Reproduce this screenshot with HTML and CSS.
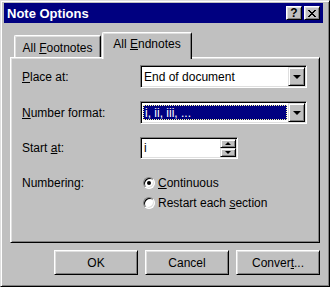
FILE: index.html
```html
<!DOCTYPE html>
<html lang="en">
<head>
    <meta charset="UTF-8">
    <title>Note Options</title>
    <link rel="stylesheet" href="styles.css">
</head>
<body>
    <div class="window">
        <div class="titlebar">
            <span class="title">Note Options</span>
            <div class="title-buttons">
                <span class="tbtn help">?</span>
                <span class="tbtn close">
                    <svg width="8" height="7" viewBox="0 0 8 7"><path d="M0 0h2v1h-2zM6 0h2v1h-2zM1 1h2v1h-2zM5 1h2v1h-2zM2 2h4v1h-4zM3 3h2v1h-2zM2 4h4v1h-4zM1 5h2v1h-2zM5 5h2v1h-2zM0 6h2v1h-2zM6 6h2v1h-2z" fill="#000"/></svg>
                </span>
            </div>
        </div>

        <div class="content">
            <div class="tabs">
                <div class="tab"><span>All <u>F</u>ootnotes</span></div>
                <div class="tab active"><span>All <u>E</u>ndnotes</span></div>
            </div>

            <div class="panel">
                <div class="row row-place">
                    <span class="label"><u>P</u>lace at:</span>
                    <div class="combo">
                        <span class="value">End of document</span>
                        <span class="drop"><span class="arrow"></span></span>
                    </div>
                </div>
                <div class="row row-format">
                    <span class="label"><u>N</u>umber format:</span>
                    <div class="combo">
                        <span class="value selected">i, ii, iii, ...</span>
                        <span class="drop"><span class="arrow"></span></span>
                    </div>
                </div>
                <div class="row row-start">
                    <span class="label">Start <u>a</u>t:</span>
                    <div class="spin">
                        <span class="value">i</span>
                        <span class="spin-buttons">
                            <span class="spin-btn"><span class="arrow up"></span></span>
                            <span class="spin-btn"><span class="arrow"></span></span>
                        </span>
                    </div>
                </div>
                <div class="row row-numbering">
                    <span class="label">Numbering:</span>
                    <div class="radios">
                        <div class="radio-row"><span class="radio checked"></span><span><u>C</u>ontinuous</span></div>
                        <div class="radio-row"><span class="radio"></span><span>Restart each <u>s</u>ection</span></div>
                    </div>
                </div>
            </div>

            <div class="buttons">
                <div class="button"><span>OK</span></div>
                <div class="button"><span>Cancel</span></div>
                <div class="button"><span>Conver<u>t</u>...</span></div>
            </div>
        </div>
    </div>
</body>
</html>
```

FILE: styles.css
```css
* {
    box-sizing: border-box;
}

body {
    margin: 0;
    font-family: "Liberation Sans", Arial, sans-serif;
    font-size: 12px;
    color: #000;
    background-color: #c0c0c0;
}

.window {
    width: 330px;
    height: 287px;
    background-color: #c0c0c0;
    border: 1px solid;
    border-color: #dfdfdf #000 #000 #dfdfdf;
    box-shadow: inset 1px 1px #fff, inset -1px -1px #808080;
    padding: 2px 3px 3px 3px;
    display: flex;
    flex-direction: column;
}

.titlebar {
    height: 20px;
    margin-right: 3px;
    background-color: #000080;
    display: flex;
    align-items: center;
    justify-content: space-between;
    padding: 0 3px 0 3px;
}

.title {
    color: #fff;
    font-weight: bold;
    font-size: 13px;
}

.title-buttons {
    display: flex;
    gap: 2px;
}

.tbtn {
    width: 16px;
    height: 14px;
    background-color: #c0c0c0;
    border: 1px solid;
    border-color: #fff #000 #000 #fff;
    box-shadow: inset 1px 1px #dfdfdf, inset -1px -1px #808080;
    display: flex;
    align-items: center;
    justify-content: center;
}

.help {
    font-weight: bold;
    font-size: 12px;
    line-height: 1;
}

.content {
    padding: 9px 6px 0 6px;
}

.tabs {
    height: 25px;
    display: flex;
    align-items: flex-end;
    padding-left: 4px;
}

.tab {
    height: 22px;
    width: 87px;
    border: 1px solid;
    border-bottom: none;
    border-color: #fff #000 #000 #fff;
    box-shadow: inset 1px 1px #dfdfdf, inset -1px 0 #808080;
    border-radius: 2px 2px 0 0;
    display: flex;
    align-items: center;
    justify-content: center;
    padding-top: 2px;
}

.tab.active {
    position: relative;
    z-index: 1;
    width: 90px;
    height: 27px;
    margin-left: 1px;
    margin-bottom: -2px;
    padding-top: 0;
    padding-bottom: 4px;
    background-color: #c0c0c0;
}

.panel {
    height: 186px;
    border: 1px solid;
    border-color: #fff #000 #000 #fff;
    box-shadow: inset 1px 1px #dfdfdf, inset -1px -1px #808080;
    padding: 7px 0 0 11px;
}

.row {
    display: flex;
    align-items: center;
}

.label {
    width: 118px;
    flex: none;
}

.row-place,
.row-format {
    height: 23px;
    margin-bottom: 13px;
}

.row-start {
    height: 22px;
}

.row-numbering {
    align-items: flex-start;
    margin-top: 16px;
}

.row-numbering .label {
    line-height: 16px;
}

.combo,
.spin {
    height: 100%;
    background-color: #fff;
    border: 1px solid;
    border-color: #808080 #fff #fff #808080;
    box-shadow: inset 1px 1px #000, inset -1px -1px #dfdfdf;
    padding: 1px 1px 1px 1px;
    display: flex;
    align-items: stretch;
}

.combo {
    width: 167px;
}

.spin {
    width: 98px;
}

.value {
    flex: 1;
    display: flex;
    align-items: center;
    padding-left: 2px;
}

.value.selected {
    margin: 2px 1px 2px 1px;
    padding-left: 1px;
    background-color: #000080;
    color: #fff;
    border: 1px dotted #ffff9c;
}

.drop {
    width: 17px;
    background-color: #c0c0c0;
    border: 1px solid;
    border-color: #dfdfdf #000 #000 #dfdfdf;
    box-shadow: inset 1px 1px #fff, inset -1px -1px #808080;
    display: flex;
    align-items: center;
    justify-content: center;
}

.arrow {
    width: 0;
    height: 0;
    border-left: 4px solid transparent;
    border-right: 4px solid transparent;
    border-top: 4px solid #000;
}

.spin-buttons {
    width: 16px;
    display: flex;
    flex-direction: column;
}

.spin-btn {
    flex: 1;
    background-color: #c0c0c0;
    border: 1px solid;
    border-color: #dfdfdf #000 #000 #dfdfdf;
    box-shadow: inset 1px 1px #fff, inset -1px -1px #808080;
    display: flex;
    align-items: center;
    justify-content: center;
}

.spin-btn .arrow {
    border-left-width: 3px;
    border-right-width: 3px;
    border-top-width: 3px;
}

.spin-btn .arrow.up {
    border-top: none;
    border-bottom: 3px solid #000;
}

.radios {
    display: flex;
    flex-direction: column;
    gap: 4px;
}

.radio-row {
    height: 16px;
    display: flex;
    align-items: center;
    gap: 3px;
    padding-left: 3px;
}

.radio {
    width: 12px;
    height: 12px;
    border-radius: 50%;
    background-color: #fff;
    border: 1px solid;
    border-color: #808080 #fff #fff #808080;
    box-shadow: inset 1px 1px #000, inset -1px -1px #dfdfdf;
    display: flex;
    align-items: center;
    justify-content: center;
}

.radio.checked::after {
    content: "";
    width: 4px;
    height: 4px;
    border-radius: 50%;
    background-color: #000;
}

.buttons {
    display: flex;
    justify-content: flex-end;
    gap: 7px;
    margin-top: 7px;
}

.button {
    width: 84px;
    height: 25px;
    border: 1px solid;
    border-color: #fff #000 #000 #fff;
    box-shadow: inset 1px 1px #dfdfdf, inset -1px -1px #808080;
    display: flex;
    align-items: center;
    justify-content: center;
}
```
